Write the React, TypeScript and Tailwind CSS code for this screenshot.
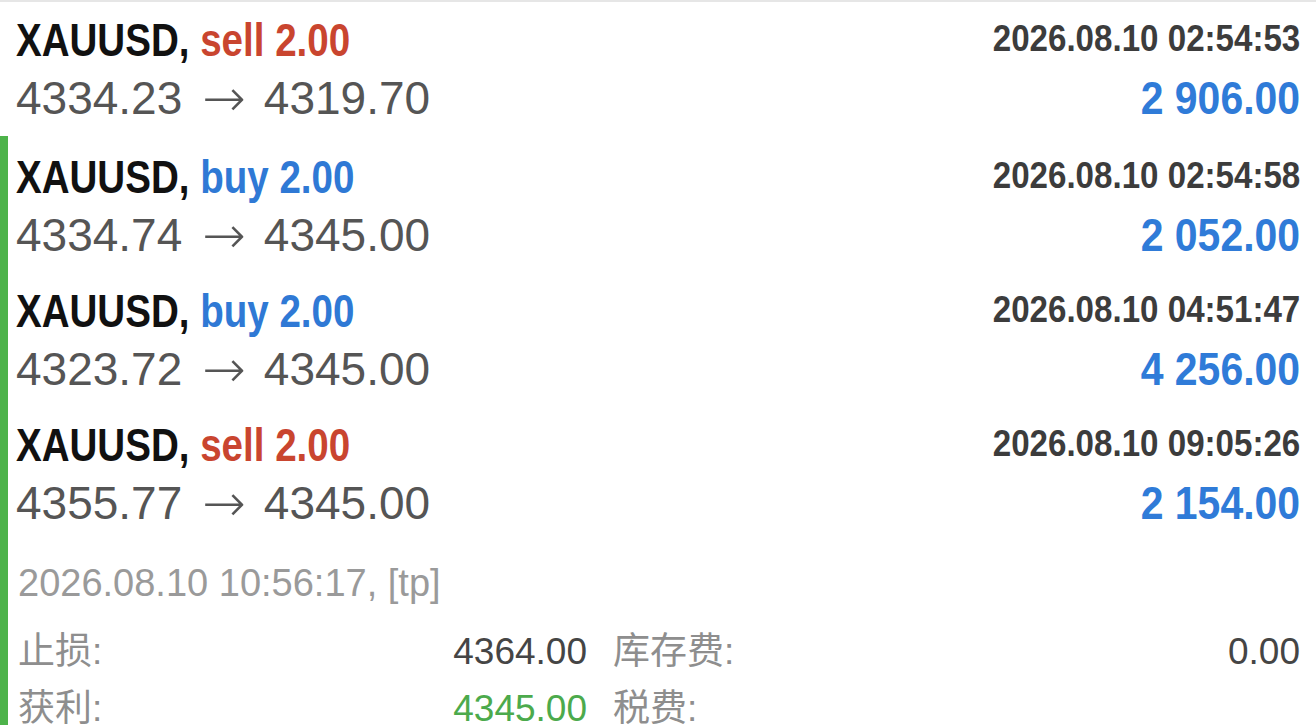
const trades = [
  { side: 'sell', open: '4334.23', close: '4319.70', time: '2026.08.10 02:54:53', profit: '2 906.00' },
  { side: 'buy', open: '4334.74', close: '4345.00', time: '2026.08.10 02:54:58', profit: '2 052.00' },
  { side: 'buy', open: '4323.72', close: '4345.00', time: '2026.08.10 04:51:47', profit: '4 256.00' },
  { side: 'sell', open: '4355.77', close: '4345.00', time: '2026.08.10 09:05:26', profit: '2 154.00' },
];

type Trade = (typeof trades)[number];

function TradeRow({ trade, top = 'pt-[12px] pb-[4px]' }: { trade: Trade; top?: string }) {
  return (
    <div className={`flex flex-col ${top}`}>
      <div className="flex h-[56px] items-center justify-between">
        <span className="inline-block origin-left scale-x-[0.82] whitespace-nowrap text-[47px] font-bold text-[#111111]">
          XAUUSD,{' '}
          <span className={trade.side === 'sell' ? 'text-[#c9452f]' : 'text-[#2f79d5]'}>
            {trade.side} 2.00
          </span>
        </span>
        <span className="inline-block origin-right scale-x-[0.92] whitespace-nowrap text-[36px] font-bold text-[#3c3c3c]">
          {trade.time}
        </span>
      </div>
      <div className="flex h-[62px] items-center justify-between">
        <span className="flex items-center whitespace-nowrap text-[46px] text-[#555555]">
          <span>{trade.open}</span>
          <span className="ml-[20px] mr-[18px] font-['DejaVu_Sans',sans-serif] text-[52px] font-extralight">→</span>
          <span>{trade.close}</span>
        </span>
        <span className="inline-block origin-right scale-x-[0.89] whitespace-nowrap text-[46px] font-bold text-[#2f7bd8]">
          {trade.profit}
        </span>
      </div>
    </div>
  );
}

export default function App() {
  const [first, ...rest] = trades;
  return (
    <div className="h-[725px] w-[1316px] overflow-hidden border-t-2 border-[#e6e6e6] bg-white font-['Liberation_Sans','Noto_Sans_CJK_SC',Arial,sans-serif] leading-none">
      <div className="pl-[16px] pr-[16px]">
        <TradeRow trade={first} top="pt-[9px] pb-[9px]" />
      </div>

      <div className="border-l-[8px] border-[#4db34a] pl-[8px] pr-[16px]">
        <div className="-mt-[2px]">
          {rest.map((t) => (
            <TradeRow key={t.time} trade={t} />
          ))}
        </div>

        <div className="mt-[20px] flex h-[50px] items-center pl-[2px] text-[38px] text-[#9a9a9a]">
          2026.08.10 10:56:17, [tp]
        </div>

        <div className="mt-[15px] grid grid-cols-[569px_1fr] gap-x-[26px] pl-[2px]">
          <div className="flex h-[57px] items-center justify-between">
            <span className="text-[37px] text-[#8e8e8e]">止损:</span>
            <span className="text-[37px] text-[#454545]">4364.00</span>
          </div>
          <div className="flex h-[57px] items-center justify-between">
            <span className="text-[37px] text-[#8e8e8e]">库存费:</span>
            <span className="text-[37px] text-[#454545]">0.00</span>
          </div>
          <div className="flex h-[57px] items-center justify-between">
            <span className="text-[37px] text-[#8e8e8e]">获利:</span>
            <span className="text-[37px] text-[#4caa4c]">4345.00</span>
          </div>
          <div className="flex h-[57px] items-center justify-between">
            <span className="text-[37px] text-[#8e8e8e]">税费:</span>
            <span className="text-[37px] text-[#dcdcdc]"></span>
          </div>
        </div>
      </div>
    </div>
  );
}
